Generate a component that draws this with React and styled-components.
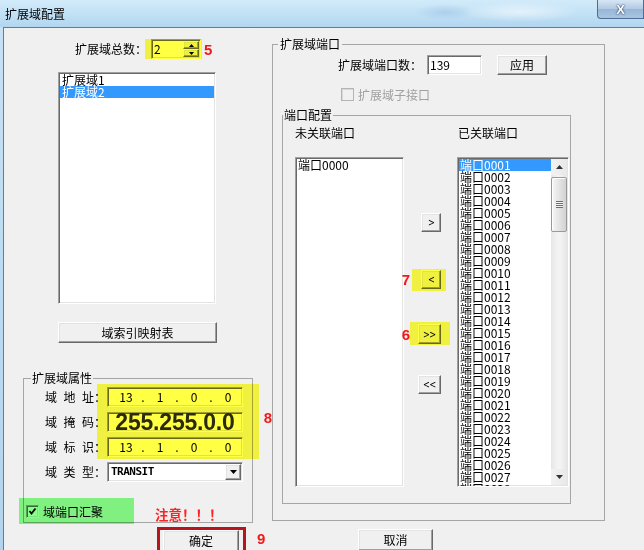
import React from 'react';
import styled, { createGlobalStyle, css } from 'styled-components';

const FONT = `"Noto Sans CJK SC", "Noto Sans", sans-serif`;

const Global = createGlobalStyle`
  html, body { margin: 0; padding: 0; background: #f0f0f0; }
  body { font-family: ${FONT}; font-size: 12px; color: #000; }
  * { box-sizing: border-box; }
`;

const sunken = css`
  border: 1px solid;
  border-color: #a0a0a0 #ffffff #ffffff #a0a0a0;
  box-shadow: inset 1px 1px 0 #696969, inset -1px -1px 0 #e3e3e3;
`;

const raised = css`
  border: 1px solid;
  border-color: #ffffff #696969 #696969 #ffffff;
  box-shadow: inset -1px -1px 0 #a0a0a0, inset 1px 1px 0 #e3e3e3;
  background: #f0f0f0;
`;

const Window = styled.div`
  position: relative;
  isolation: isolate;
  width: 644px;
  height: 550px;
  overflow: hidden;
  display: flex;
  flex-direction: column;
  background: linear-gradient(180deg, #c6e2f6 0%, #b3d4ee 100%);
  font-family: ${FONT};
  font-size: 12px;
`;

const TitleBar = styled.div`
  height: 27px;
  flex: none;
  display: flex;
  justify-content: space-between;
  padding-left: 5px;
  background:
    radial-gradient(ellipse 60px 10px at 520px 12px, rgba(255,255,255,0.55), rgba(255,255,255,0) 100%),
    radial-gradient(ellipse 30px 8px at 445px 12px, rgba(150,190,225,0.5), rgba(150,190,225,0) 100%),
    linear-gradient(180deg, #d2ebfa 0%, #c0e0f5 55%, #b2d5ef 100%);
`;

const TitleText = styled.span`
  align-self: center;
  line-height: 12px;
  font-size: 12px;
  color: #000;
`;

const CloseBtn = styled.div`
  width: 47px;
  height: 19px;
  border: 1px solid #4d6d92;
  border-top: none;
  border-radius: 0 0 0 4px;
  background: linear-gradient(180deg, #d7e6f4 0%, #b0c9e2 50%, #97b5d5 51%, #a9c5e2 100%);
  display: flex;
  align-items: center;
  justify-content: center;
  color: #fff;
  font: bold 13px "Liberation Sans", Arial, sans-serif;
  text-shadow: 0 0 1px #1d3a5c, 0 0 2px #1d3a5c;
`;

const Body = styled.div`
  flex: 1;
  margin-left: 3px;
  display: flex;
  background: #f0f0f0;
  border-top: 1px solid #6a7b8e;
  border-left: 1px solid #6a7b8e;
`;

const LeftCol = styled.div`
  width: 268px;
  flex: none;
  display: flex;
  flex-direction: column;
`;

const RightCol = styled.div`
  flex: 1;
  min-width: 0;
  display: flex;
  flex-direction: column;
`;

const Text = styled.span`
  line-height: 12px;
  white-space: nowrap;
  margin-right: ${p => p.$mr || 0}px;
`;

const RedNum = styled.span`
  color: #f01818;
  font-family: "Liberation Sans", Arial, sans-serif;
  font-weight: bold;
  font-size: 15px;
  line-height: 15px;
  margin-left: ${p => p.$ml || 0}px;
  margin-right: ${p => p.$mr || 0}px;
  margin-top: ${p => p.$mt || 0}px;
`;

const WinButton = styled.button`
  ${raised};
  appearance: none;
  font-family: ${FONT};
  font-size: 12px;
  line-height: 12px;
  color: #000;
  padding: 0;
  margin: 0;
  display: flex;
  align-items: center;
  justify-content: center;
  flex: none;
  width: ${p => p.$w}px;
  height: ${p => p.$h}px;
`;

const SpinRow = styled.div`
  display: flex;
  align-items: center;
  height: 20px;
  margin-top: 11px;
  padding-left: 71px;
`;

const Spin = styled.div`
  ${sunken};
  width: 50px;
  height: 20px;
  padding: 1px;
  background: #fff;
  display: flex;
  align-items: center;
`;

const SpinValue = styled.span`
  flex: 1;
  line-height: 12px;
  padding-left: 1px;
`;

const SpinButtons = styled.div`
  width: 16px;
  height: 16px;
  display: flex;
  flex-direction: column;
`;

const SpinBtn = styled.div`
  ${raised};
  flex: 1;
  display: flex;
  align-items: center;
  justify-content: center;
`;

const ListBox = styled.div`
  ${sunken};
  padding: 1px;
  background: #fff;
  display: flex;
  overflow: hidden;
  width: ${p => p.$w}px;
  height: ${p => p.$h}px;
`;

const ListItems = styled.div`
  flex: 1;
  min-width: 0;
`;

const ListItem = styled.div`
  height: 12px;
  line-height: 12px;
  padding-left: ${p => p.$pl ?? 1}px;
  white-space: nowrap;
  ${p => p.$selected && css`
    background: #3399ff;
    color: #fff;
  `}
`;

const DomainList = styled(ListBox)`
  margin: 13px 0 0 54px;
`;

const MapButton = styled(WinButton)`
  margin: 18px 0 0 54px;
`;

const Group = styled.fieldset`
  margin: 0;
  padding: 0 0 ${p => p.$pb}px 0;
  min-width: 0;
  border: 1px solid #a6a6a6;
  width: ${p => p.$w}px;
`;

const Legend = styled.legend`
  padding: 0 ${p => p.$pad}px;
  margin-left: ${p => p.$ml}px;
  line-height: 12px;
  font-size: 12px;
`;

const AttrRow = styled.div`
  display: flex;
  align-items: flex-start;
  margin-top: 29px;
  padding-left: 19px;
`;

const FieldRow = styled.div`
  display: flex;
  align-items: center;
  height: 20px;
  margin-top: ${p => p.$mt}px;
  padding-left: 21px;
`;

const FieldLabel = styled.span`
  width: 62px;
  flex: none;
  display: flex;
  line-height: 12px;
  white-space: nowrap;
`;

const LabelChar = styled.span`
  width: ${p => p.$w || 12}px;
  flex: none;
  margin-right: ${p => p.$gap || 0}px;
`;

const Field = styled.div`
  ${sunken};
  width: 136px;
  height: 20px;
  padding: 1px;
  background: #fff;
  display: flex;
  align-items: center;
  overflow: visible;
`;

const IpField = styled(Field)`
  padding-left: 6px;
`;

const IpSeg = styled.span`
  width: 24px;
  text-align: center;
  line-height: 12px;
`;

const IpDot = styled.span`
  width: 10px;
  text-align: center;
  line-height: 12px;
`;

const BigMask = styled.span`
  flex: 1;
  text-align: center;
  font-family: "Liberation Sans", Arial, sans-serif;
  font-weight: bold;
  font-size: 23px;
  line-height: 18px;
  color: #2b2b2b;
  letter-spacing: -0.2px;
`;

const SelectText = styled.span`
  flex: 1;
  padding-left: 2px;
  font-family: "DejaVu Sans Mono", "Liberation Mono", monospace;
  font-weight: bold;
  font-size: 11px;
  letter-spacing: -0.5px;
  line-height: 12px;
`;

const SelectArrow = styled.span`
  ${raised};
  width: 16px;
  height: 16px;
  display: flex;
  align-items: center;
  justify-content: center;
`;

const CheckRow = styled.div`
  display: flex;
  align-items: center;
  height: 13px;
  margin-top: ${p => p.$mt}px;
  padding-left: ${p => p.$pl}px;
`;

const CheckBox = styled.span`
  width: 13px;
  height: 13px;
  flex: none;
  display: flex;
  align-items: center;
  justify-content: center;
  ${p => p.$disabled ? css`
    border: 1px solid #b5b5b5;
    background: #f0f0f0;
    box-shadow: inset 1px 1px 0 #d8d8d8;
  ` : css`
    ${sunken};
    background: #fff;
  `}
`;

const CheckText = styled.span`
  margin-left: 4px;
  line-height: 12px;
  white-space: nowrap;
  color: ${p => p.$disabled ? '#a0a0a0' : '#000'};
`;

const Notice = styled.span`
  margin-left: 52px;
  align-self: flex-start;
  margin-top: 2px;
  color: #ff2222;
  font-weight: bold;
  font-size: 13.5px;
  line-height: 14px;
  white-space: nowrap;
`;

const ConfirmRow = styled.div`
  display: flex;
  align-items: flex-start;
  margin-top: 4px;
  padding-left: 153px;
`;

const RedFrame = styled.div`
  border: 3px solid #b3161c;
  padding: 0 4px 0 3px;
  height: 30px;
`;

const OuterGroup = styled(Group)`
  margin-top: 10px;
`;

const PortCountRow = styled.div`
  display: flex;
  align-items: center;
  height: 20px;
  margin-top: 5px;
  padding-left: 65px;
`;

const TextInput = styled.div`
  ${sunken};
  width: 55px;
  height: 20px;
  padding: 1px 1px 1px 2px;
  background: #fff;
  display: flex;
  align-items: center;
  line-height: 12px;
`;

const ApplyButton = styled(WinButton)`
  margin-left: 15px;
`;

const InnerGroup = styled(Group)`
  margin: 8px 0 0 9px;
`;

const PortGrid = styled.div`
  display: grid;
  grid-template-columns: 109px 53px 112px;
  padding-left: 12px;
  margin-top: ${p => p.$mt}px;
  line-height: 12px;
`;

const HeaderCell = styled.span`
  padding-left: ${p => p.$pl || 0}px;
  white-space: nowrap;
`;

const MidCol = styled.div`
  display: flex;
  flex-direction: column;
  align-items: flex-end;
  padding-right: 16px;
`;

const MoveRow = styled.div`
  display: flex;
  align-items: center;
  margin-top: ${p => p.$mt}px;
`;

const Chevron = styled.span`
  font-family: "DejaVu Sans", sans-serif;
  font-size: 11px;
  line-height: 11px;
  letter-spacing: -1px;
  transform: scaleX(0.75);
`;

const Scrollbar = styled.div`
  width: 16px;
  flex: none;
  display: flex;
  flex-direction: column;
  background: linear-gradient(90deg, #e6e6e6 0%, #f3f3f3 40%, #f3f3f3 60%, #e6e6e6 100%);
`;

const ScrollArrow = styled.div`
  height: 16px;
  flex: none;
  display: flex;
  align-items: center;
  justify-content: center;
  background: linear-gradient(90deg, #f2f2f2, #e8e8e8);
`;

const ScrollThumb = styled.div`
  margin-top: 2px;
  height: 55px;
  flex: none;
  border: 1px solid #999;
  border-radius: 2px;
  background: linear-gradient(90deg, #f6f6f6 0%, #e4e4e4 50%, #d2d2d2 100%);
  box-shadow: inset 1px 1px 0 #fff;
  display: flex;
  align-items: center;
  justify-content: center;
`;

const Grip = styled.div`
  width: 7px;
  height: 7px;
  background: repeating-linear-gradient(180deg, #6e6e6e 0 1px, #f4f4f4 1px 2px);
`;

const ScrollTrack = styled.div`
  flex: 1;
`;

const CancelButton = styled(WinButton)`
  margin: 8px 0 0 86px;
`;

const Highlight = styled.div`
  position: absolute;
  pointer-events: none;
  mix-blend-mode: multiply;
  left: ${p => p.$x}px;
  top: ${p => p.$y}px;
  width: ${p => p.$w}px;
  height: ${p => p.$h}px;
  background: ${p => p.$c};
`;

const Tri = ({ dir = 'down', w = 7, h = 4, color = '#000' }) => (
  <svg width={w} height={h} viewBox={`0 0 ${w} ${h}`} style={{ display: 'block' }}>
    <polygon
      points={dir === 'down' ? `0,0 ${w},0 ${w / 2},${h}` : `0,${h} ${w},${h} ${w / 2},0`}
      fill={color}
    />
  </svg>
);

const Check = () => (
  <svg width="9" height="9" viewBox="0 0 9 9" style={{ display: 'block' }}>
    <polyline points="1.5,4 3.5,6.5 7.5,1.5" fill="none" stroke="#000" strokeWidth="1.8" />
  </svg>
);

const SpacedLabel = ({ text }) => {
  const chars = text.split('');
  return (
    <FieldLabel>
      {chars.map((c, i) => (
        <LabelChar key={i} $gap={i < chars.length - 1 ? 6.5 : 0}>{c}</LabelChar>
      ))}
      <LabelChar>：</LabelChar>
    </FieldLabel>
  );
};

const IpValue = ({ parts }) => (
  <IpField>
    {parts.map((p, i) => (
      <React.Fragment key={i}>
        {i > 0 && <IpDot>.</IpDot>}
        <IpSeg>{p}</IpSeg>
      </React.Fragment>
    ))}
  </IpField>
);

const YELLOW = '#ffff44';
const GREEN = '#88ff88';

export default function App() {
  const ports = Array.from({ length: 28 }, (_, i) => `端口${String(i + 1).padStart(4, '0')}`);
  return (
    <>
      <Global />
      <Window>
        <TitleBar>
          <TitleText>扩展域配置</TitleText>
          <CloseBtn>X</CloseBtn>
        </TitleBar>
        <Body>
          <LeftCol>
            <SpinRow>
              <Text $mr={4}>扩展域总数：</Text>
              <Spin>
                <SpinValue>2</SpinValue>
                <SpinButtons>
                  <SpinBtn><Tri dir="up" w={5} h={3} /></SpinBtn>
                  <SpinBtn><Tri dir="down" w={5} h={3} /></SpinBtn>
                </SpinButtons>
              </Spin>
              <RedNum $ml={3}>5</RedNum>
            </SpinRow>

            <DomainList $w={158} $h={232}>
              <ListItems>
                <ListItem $pl={2}>扩展域1</ListItem>
                <ListItem $pl={2} $selected>扩展域2</ListItem>
              </ListItems>
            </DomainList>

            <MapButton $w={159} $h={21}>域索引映射表</MapButton>

            <AttrRow>
              <Group $w={232} $pb={4}>
                <Legend $ml={7} $pad={1}>扩展域属性</Legend>
                <FieldRow $mt={3}>
                  <SpacedLabel text="域地址" />
                  <IpValue parts={['13', '1', '0', '0']} />
                </FieldRow>
                <FieldRow $mt={5}>
                  <SpacedLabel text="域掩码" />
                  <Field><BigMask>255.255.0.0</BigMask></Field>
                </FieldRow>
                <FieldRow $mt={5}>
                  <SpacedLabel text="域标识" />
                  <IpValue parts={['13', '1', '0', '0']} />
                </FieldRow>
                <FieldRow $mt={5}>
                  <SpacedLabel text="域类型" />
                  <Field>
                    <SelectText>TRANSIT</SelectText>
                    <SelectArrow><Tri dir="down" w={7} h={4} /></SelectArrow>
                  </Field>
                </FieldRow>
                <CheckRow $mt={23} $pl={2}>
                  <CheckBox><Check /></CheckBox>
                  <CheckText>域端口汇聚</CheckText>
                  <Notice>注意！！！</Notice>
                </CheckRow>
              </Group>
              <RedNum $ml={11} $mt={38}>8</RedNum>
            </AttrRow>

            <ConfirmRow>
              <RedFrame>
                <WinButton $w={76} $h={22}>确定</WinButton>
              </RedFrame>
              <RedNum $ml={11} $mt={4}>9</RedNum>
            </ConfirmRow>
          </LeftCol>

          <RightCol>
            <OuterGroup $w={333} $pb={16}>
              <Legend $ml={5} $pad={2}>扩展域端口</Legend>
              <PortCountRow>
                <Text $mr={5}>扩展域端口数：</Text>
                <TextInput>139</TextInput>
                <ApplyButton $w={50} $h={20}>应用</ApplyButton>
              </PortCountRow>
              <CheckRow $mt={13} $pl={68}>
                <CheckBox $disabled />
                <CheckText $disabled>扩展域子接口</CheckText>
              </CheckRow>

              <InnerGroup $w={289} $pb={16}>
                <Legend $ml={0} $pad={1}>端口配置</Legend>
                <PortGrid $mt={6}>
                  <HeaderCell>未关联端口</HeaderCell>
                  <span />
                  <HeaderCell $pl={1}>已关联端口</HeaderCell>
                </PortGrid>
                <PortGrid $mt={18}>
                  <ListBox $w={109} $h={330}>
                    <ListItems>
                      <ListItem>端口0000</ListItem>
                    </ListItems>
                  </ListBox>

                  <MidCol>
                    <MoveRow $mt={56}>
                      <WinButton $w={20} $h={19}><Chevron>&gt;</Chevron></WinButton>
                    </MoveRow>
                    <MoveRow $mt={38}>
                      <RedNum $mr={11}>7</RedNum>
                      <WinButton $w={20} $h={19}><Chevron>&lt;</Chevron></WinButton>
                    </MoveRow>
                    <MoveRow $mt={35}>
                      <RedNum $mr={8}>6</RedNum>
                      <WinButton $w={23} $h={20}><Chevron>&gt;&gt;</Chevron></WinButton>
                    </MoveRow>
                    <MoveRow $mt={31}>
                      <WinButton $w={23} $h={19}><Chevron>&lt;&lt;</Chevron></WinButton>
                    </MoveRow>
                  </MidCol>

                  <ListBox $w={112} $h={330}>
                    <ListItems>
                      {ports.map((p, i) => (
                        <ListItem key={p} $selected={i === 0}>{p}</ListItem>
                      ))}
                    </ListItems>
                    <Scrollbar>
                      <ScrollArrow><Tri dir="up" w={7} h={4} color="#333" /></ScrollArrow>
                      <ScrollThumb><Grip /></ScrollThumb>
                      <ScrollTrack />
                      <ScrollArrow><Tri dir="down" w={7} h={4} color="#333" /></ScrollArrow>
                    </Scrollbar>
                  </ListBox>
                </PortGrid>
              </InnerGroup>
            </OuterGroup>
            <CancelButton $w={75} $h={22}>取消</CancelButton>
          </RightCol>
        </Body>

        <Highlight $x={145} $y={39} $w={57} $h={20} $c={YELLOW} />
        <Highlight $x={97} $y={384} $w={162} $h={75} $c={YELLOW} />
        <Highlight $x={412} $y={269} $w={34} $h={22} $c={YELLOW} />
        <Highlight $x={410} $y={322} $w={40} $h={23} $c={YELLOW} />
        <Highlight $x={19} $y={498} $w={115} $h={26} $c={GREEN} />
      </Window>
    </>
  );
}
